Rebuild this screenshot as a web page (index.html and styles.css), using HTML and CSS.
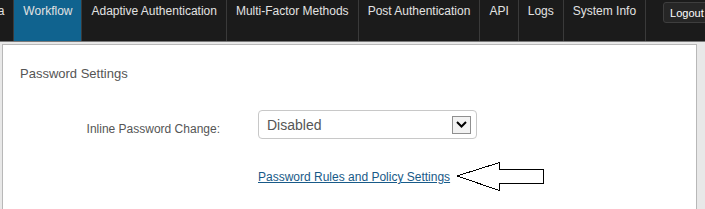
FILE: index.html
```html
<!DOCTYPE html>
<html lang="en">
<head>
  <meta charset="UTF-8" />
  <title>Password Settings</title>
  <link rel="stylesheet" href="styles.css">
</head>
<body>
  <nav class="topnav">
    <a class="tab tab-cut" href="#">Data</a>
    <a class="tab active" href="#">Workflow</a>
    <a class="tab" href="#">Adaptive Authentication</a>
    <a class="tab" href="#">Multi-Factor Methods</a>
    <a class="tab" href="#">Post Authentication</a>
    <a class="tab" href="#">API</a>
    <a class="tab" href="#">Logs</a>
    <a class="tab" href="#">System Info</a>
    <button class="logout" type="button">Logout</button>
  </nav>

  <div class="page">
    <div class="panel">
      <h2 class="panel-title">Password Settings</h2>

      <div class="form-row">
        <label class="form-label" for="inlineChange">Inline Password Change:</label>
        <div class="select" id="inlineChange">
          <span class="select-value">Disabled</span>
          <span class="select-arrow">
            <svg width="11" height="7" viewBox="0 0 11 7">
              <polyline points="1,1 5.5,5.5 10,1" fill="none" stroke="#000" stroke-width="2"/>
            </svg>
          </span>
        </div>
      </div>

      <div class="link-row">
        <a class="policy-link" href="#">Password Rules and Policy Settings</a>
        <svg class="pointer-arrow" width="89" height="30" viewBox="0 0 89 30">
          <polygon points="1,14 43.5,0.5 43.5,7.5 87.5,7.5 87.5,21.5 43.5,21.5 43.5,28.5" fill="#fff" stroke="#000" stroke-width="1"/>
        </svg>
      </div>
    </div>
  </div>
</body>
</html>
```

FILE: styles.css
```css
body {
  margin: 0;
  background: #e8e8e8;
  font-family: "Liberation Sans", Arial, sans-serif;
  color: #555;
  overflow: hidden;
}
.topnav {
  display: flex;
  height: 41px;
  background: #1b1b1b;
  border-bottom: 1px solid #7a7a7a;
  overflow: hidden;
}
.tab {
  flex-shrink: 0;
  padding: 4px 9px 0;
  font-size: 12px;
  line-height: 14px;
  color: #e2e2e2;
  text-decoration: none;
  border-right: 1px solid #3a3a3a;
}
.tab-cut {
  margin-left: -30px;
}
.tab.active {
  background: #10638f;
}
.logout {
  flex-shrink: 0;
  align-self: flex-start;
  margin: 2px 0 0 17px;
  height: 21px;
  padding: 0 8px 0 6px;
  background: #262626;
  border: 1px solid #3e3e3e;
  border-radius: 3px;
  color: #fff;
  font-family: "Liberation Sans", Arial, sans-serif;
  font-size: 11px;
}
.page {
  padding: 2px 8px 0 2px;
}
.panel {
  min-height: 200px;
  background: #fff;
  border: 1px solid #b8b8b8;
  padding: 21px 0 0 17px;
}
.panel-title {
  margin: 0;
  font-size: 13px;
  line-height: 16px;
  font-weight: normal;
  color: #555;
}
.form-row {
  display: flex;
  align-items: flex-start;
  gap: 38px;
  margin-top: 28px;
}
.form-label {
  width: 200px;
  padding-top: 12px;
  font-size: 12px;
  line-height: 14px;
  text-align: right;
}
.select {
  display: flex;
  align-items: center;
  justify-content: space-between;
  box-sizing: border-box;
  width: 219px;
  height: 29px;
  padding: 0 5px 0 8px;
  border: 1px solid #c8c8c8;
  border-radius: 4px;
  font-size: 14px;
  line-height: 16px;
}
.select-arrow {
  display: flex;
  align-items: center;
  justify-content: center;
  box-sizing: border-box;
  width: 19px;
  height: 18px;
  border: 1px solid #8f8f8f;
  background: #f2f2f2;
}
.link-row {
  display: flex;
  align-items: center;
  margin: 23px 0 0 238px;
}
.policy-link {
  font-size: 12px;
  line-height: 14px;
  color: #185a88;
}
.pointer-arrow {
  margin-left: 6px;
  shape-rendering: crispEdges;
}
```
